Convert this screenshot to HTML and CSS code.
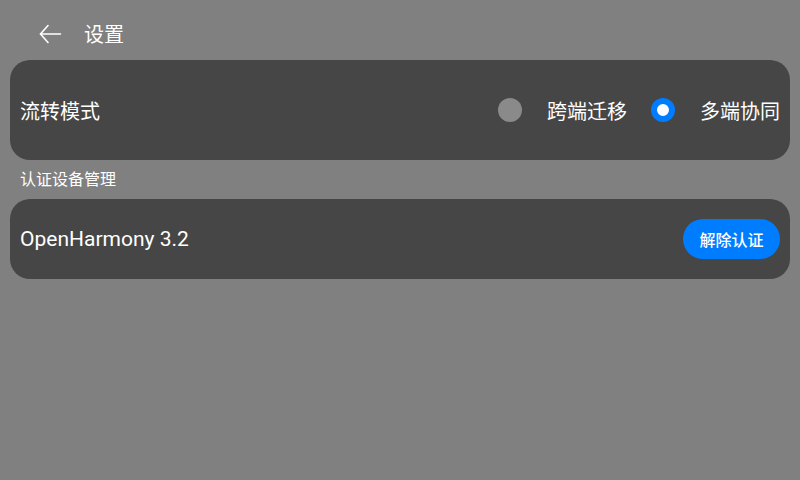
FILE: index.html
```html
<!DOCTYPE html>
<html lang="zh">
<head>
<meta charset="utf-8">
<link rel="stylesheet" href="styles.css">
</head>
<body>
<div class="page">
  <header class="header">
    <svg class="back" width="24" height="24" viewBox="0 0 24 24" fill="none" stroke="#ffffff" stroke-width="1.6" stroke-linecap="round" stroke-linejoin="round">
      <path d="M22.5 12H2.5"/>
      <path d="M10 3.5L2.5 12L10 20.5"/>
    </svg>
    <span class="title">设置</span>
  </header>
  <section class="card mode">
    <span class="label">流转模式</span>
    <div class="options">
      <span class="radio off"></span>
      <span class="opt">跨端迁移</span>
      <span class="radio on"></span>
      <span class="opt">多端协同</span>
    </div>
  </section>
  <div class="section">认证设备管理</div>
  <section class="card device">
    <span class="label latin">OpenHarmony 3.2</span>
    <button class="btn">解除认证</button>
  </section>
</div>
</body>
</html>
```
FILE: styles.css
```css
html, body {
  margin: 0;
  padding: 0;
}
body {
  width: 800px;
  height: 480px;
  background: #808080;
  font-family: "Noto Sans CJK SC", "Noto Sans", sans-serif;
  color: #ffffff;
  overflow: hidden;
}
.page {
  padding: 0 10px;
  display: flex;
  flex-direction: column;
}
.header {
  height: 60px;
  display: flex;
  align-items: center;
  padding-left: 28px;
  padding-top: 8px;
  box-sizing: border-box;
}
.back {
  display: block;
}
.title {
  margin-left: 22px;
  font-size: 20px;
  line-height: 24px;
}
.card {
  background: #464646;
  border-radius: 20px;
  display: flex;
  align-items: center;
  padding: 0 10px;
}
.mode {
  height: 100px;
}
.device {
  height: 80px;
}
.label {
  font-size: 20px;
  flex: 1;
}
.latin {
  font-family: Roboto, "Noto Sans CJK SC", sans-serif;
  font-size: 21px;
}
.options {
  display: flex;
  align-items: center;
}
.radio {
  width: 24px;
  height: 24px;
  border-radius: 50%;
  box-sizing: border-box;
}
.radio.off {
  background: #8a8a8a;
}
.radio.on {
  background: #ffffff;
  border: 6px solid #007dff;
}
.opt {
  font-size: 20px;
  margin-left: 25px;
  margin-right: 24px;
}
.opt:last-child {
  margin-right: 0;
}
.section {
  height: 39px;
  font-size: 16px;
  line-height: 37px;
  padding-left: 10px;
}
.btn {
  width: 97px;
  height: 40px;
  border: none;
  border-radius: 20px;
  background: #007dff;
  color: #ffffff;
  font-family: "Noto Sans CJK SC", sans-serif;
  font-size: 16px;
  font-weight: 500;
  padding: 0;
}
```
